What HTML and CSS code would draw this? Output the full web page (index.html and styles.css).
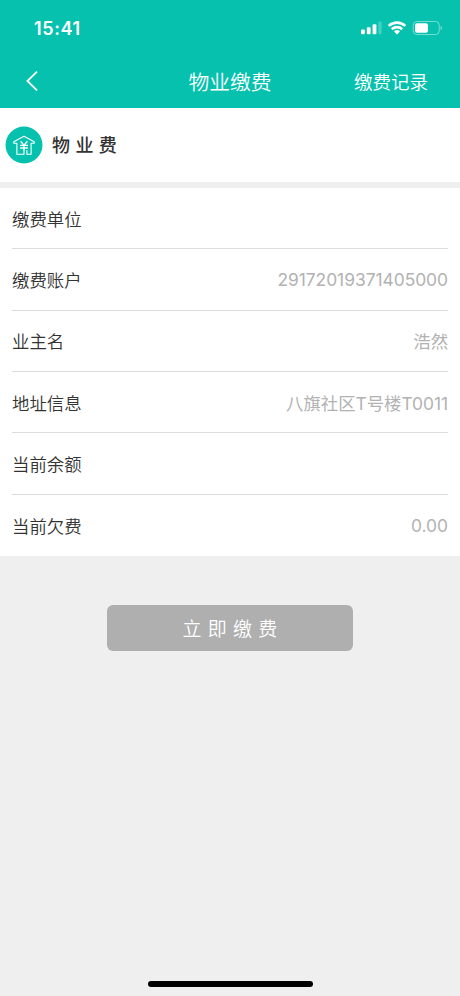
FILE: index.html
```
<!DOCTYPE html>
<html lang="zh-CN">
<head>
  <meta charset="UTF-8" />
  <meta name="viewport" content="width=device-width, initial-scale=1" />
  <title>物业缴费</title>
  <link rel="stylesheet" href="styles.css">
</head>
<body>
  <!-- Header -->
  <header class="header">
    <div class="status-bar">
      <span class="time">15:41</span>
      <svg class="status-icons" width="84" height="18" viewBox="0 0 84 18" fill="#fff">
        <rect x="1" y="11.5" width="3.8" height="4.8" rx="1" />
        <rect x="6.8" y="9.3" width="3.8" height="7" rx="1" />
        <rect x="12.6" y="6.3" width="3.8" height="10" rx="1" />
        <rect x="18.4" y="3.5" width="3.2" height="12.8" rx="1" opacity=".25" />
        <g fill="none" stroke="#fff" stroke-width="2.6">
          <path d="M28.7 7.9a12.2 12.2 0 0 1 16.6 0" />
          <path d="M31.8 11.2a7.5 7.5 0 0 1 10.4 0" />
        </g>
        <path d="M34 13.5a4.3 4.3 0 0 1 6 0l-3 3z" />
        <rect x="53.2" y="3.5" width="26" height="13" rx="3.6" fill="none" stroke="#fff" opacity=".45" />
        <rect x="55" y="5.3" width="13" height="9.4" rx="2" />
        <path d="M80.6 8v4.2q1.4-.6 1.4-2.1t-1.4-2.1z" opacity=".5" />
      </svg>
    </div>
    <nav class="nav">
      <svg class="back" width="14" height="22" viewBox="0 0 14 22" fill="none" stroke="#fff" stroke-width="1.8">
        <path d="M12 1.6 2.4 11l9.6 9.4" />
      </svg>
      <h1>物业缴费</h1>
      <a class="record">缴费记录</a>
    </nav>
  </header>

  <!-- Fee type -->
  <section class="fee-type">
    <svg width="38" height="38" viewBox="0 0 38 38" fill="none" stroke="#fff" stroke-width="1.1" stroke-linejoin="round" stroke-linecap="round">
      <circle cx="19" cy="19" r="18.5" fill="#06c1ae" stroke="none" />
      <path d="M19 24v4.3h-7.1V17.2H8.8v-1.4L19 10.2l10.2 5.6v1.4h-3.1v11.1h-4.2V24.5" />
      <path d="m16 15.8 3 3.4 3-3.4M15.6 19.4h6.8M15.6 22h6.8M19 19.4V24" stroke-width="1.3" />
    </svg>
    <h2>物业费</h2>
  </section>

  <!-- Bill info -->
  <ul class="info">
    <li><span>缴费单位</span></li>
    <li><span>缴费账户</span><em>29172019371405000</em></li>
    <li><span>业主名</span><em>浩然</em></li>
    <li><span>地址信息</span><em>八旗社区T号楼T0011</em></li>
    <li><span>当前余额</span></li>
    <li><span>当前欠费</span><em>0.00</em></li>
  </ul>

  <button class="pay-btn">立即缴费</button>

  <div class="home-bar"></div>
</body>
</html>
```
FILE: styles.css
```
* { box-sizing: border-box; margin: 0; padding: 0; }
body {
  height: 996px;
  display: flex;
  flex-direction: column;
  background: #efefef;
  color: #333;
  font-family: Inter, "Noto Sans CJK SC", sans-serif;
  font-weight: 350;
  overflow: hidden;
}

/* Header */
.header {
  height: 108px;
  background: #06c1ae;
  color: #fff;
}
.status-bar {
  height: 54px;
  padding: 3px 16px 0 34px;
  display: flex;
  justify-content: space-between;
  align-items: center;
}
.time {
  font-size: 18px;
  font-weight: 600;
  letter-spacing: 0.6px;
}
.status-icons { margin-top: -3px; }
.nav {
  height: 54px;
  padding: 0 32px 1px 25px;
  display: grid;
  grid-template-columns: 1fr auto 1fr;
  align-items: center;
}
.nav h1 {
  padding-left: 7px;
  font-size: 20.8px;
  font-weight: 350;
}
.back { margin-top: 1px; }
.record {
  font-size: 18.5px;
  text-align: right;
}

/* Fee type */
.fee-type {
  height: 74px;
  padding-left: 5px;
  display: flex;
  align-items: center;
  background: #fff;
}
.fee-type h2 {
  margin: -2px 0 0 9px;
  font-size: 18px;
  font-weight: 500;
  letter-spacing: 5.4px;
}

/* Bill info */
.info {
  height: 368px;
  margin-top: 6px;
  padding: 0 12px;
  display: grid;
  grid-template-rows: repeat(6, 1fr);
  background: #fff;
  list-style: none;
  font-size: 17.4px;
}
.info li {
  display: flex;
  justify-content: space-between;
  align-items: center;
  border-bottom: 1px solid #dcdcdc;
}
.info li:last-child { border-bottom: 0; }
.info em {
  color: #b2b2b2;
  font-style: normal;
  font-weight: 400;
  letter-spacing: -0.03px;
}

/* Pay button */
.pay-btn {
  width: 246px;
  height: 46px;
  margin: 49px auto 0;
  padding: 0 0 2px 6px;
  border: 0;
  border-radius: 6px;
  background: #afafaf;
  color: #fff;
  font: 350 19px "Noto Sans CJK SC", sans-serif;
  letter-spacing: 6.2px;
}

.home-bar {
  width: 165px;
  height: 6px;
  margin: auto auto 9px;
  border-radius: 3px;
  background: #000;
}
```
